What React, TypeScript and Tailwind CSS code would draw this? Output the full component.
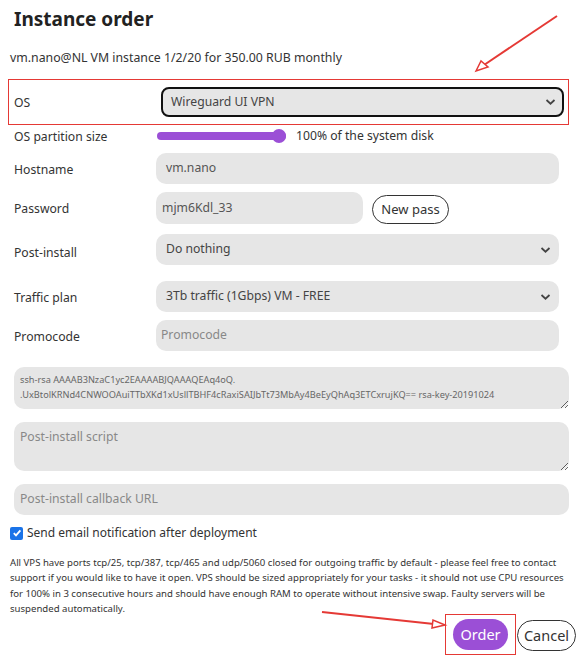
import React from "react";

const font = { fontFamily: '"Noto Sans", "Open Sans", Arial, sans-serif' };

function Chevron() {
  return (
    <svg className="absolute right-[8px] top-1/2 -translate-y-1/2" width="11" height="7" viewBox="0 0 11 7">
      <path d="M1.5 1.5 L5.5 5.2 L9.5 1.5" fill="none" stroke="#444" strokeWidth="1.8" />
    </svg>
  );
}

function Label({ children }: { children: React.ReactNode }) {
  return <div className="w-[142px] shrink-0 text-[12.2px] leading-[20px] pt-[2px] text-[#333]">{children}</div>;
}

export default function App() {
  return (
    <div className="relative w-[585px] h-[663px] bg-white overflow-hidden text-[#333]" style={font}>
      <div className="pl-[14px] pt-[6px] text-[19px] leading-[26px] font-bold text-[#222]">Instance order</div>
      <div className="mt-[16px] pl-[10px] text-[12.3px] leading-[20px] text-[#333]">
        vm.nano@NL VM instance 1/2/20 for 350.00 RUB monthly
      </div>

      <div className="mt-[11px] ml-[8px] w-[561px] h-[46px] border border-[#e53935] flex items-center pl-[5px]">
        <div className="w-[147px] shrink-0 text-[12.2px] pt-[2px] text-[#333]">OS</div>
        <div className="relative w-[403px] h-[30px]">
          <div className="w-full h-full rounded-[8px] border-2 border-[#111] bg-[#e6e6e6] flex items-center pl-[8px] text-[12.2px] text-[#444]">
            Wireguard UI VPN
          </div>
          <Chevron />
        </div>
      </div>

      <div className="flex items-center h-[22px] pl-[14px]">
        <Label>OS partition size</Label>
        <div className="relative w-[129px] h-[14px] ml-[1px] flex items-center">
          <div className="w-full h-[8px] rounded-full bg-[#9b4fd6]" />
          <div className="absolute right-[0px] top-0 w-[14px] h-[14px] rounded-full bg-[#9b4fd6]" />
        </div>
        <div className="ml-[10px] text-[12.2px] text-[#333]">100% of the system disk</div>
      </div>

      <div className="flex items-center mt-[6px] pl-[14px]">
        <Label>Hostname</Label>
        <div className="w-[403px] h-[31px] rounded-[10px] bg-[#e6e6e6] flex items-center pl-[10px] text-[12.2px] text-[#555]">
          vm.nano
        </div>
      </div>

      <div className="flex items-center mt-[8px] pl-[14px]">
        <Label>Password</Label>
        <div className="w-[207px] h-[32px] rounded-[10px] bg-[#e6e6e6] flex items-center pl-[6px] text-[12.2px] text-[#555]">
          mjm6Kdl_33
        </div>
        <div className="ml-[9px] mt-[3px] w-[77px] h-[29px] rounded-full border border-[#333] flex items-center justify-center text-[13px] text-[#333]">
          New pass
        </div>
      </div>

      <div className="flex items-center mt-[10px] pl-[14px]">
        <div className="w-[142px] shrink-0 text-[12.2px] text-[#333] pt-[8px]">Post-install</div>
        <div className="relative w-[403px] h-[31px] rounded-[10px] bg-[#e6e6e6] flex items-center pl-[10px] text-[12.2px] text-[#444]">
          Do nothing
          <Chevron />
        </div>
      </div>

      <div className="flex items-center mt-[16px] pl-[14px]">
        <Label>Traffic plan</Label>
        <div className="relative w-[403px] h-[31px] rounded-[10px] bg-[#e6e6e6] flex items-center pl-[10px] text-[12.2px] text-[#444]">
          3Tb traffic (1Gbps) VM - FREE
          <Chevron />
        </div>
      </div>

      <div className="flex items-center mt-[8px] pl-[14px]">
        <Label>Promocode</Label>
        <div className="w-[403px] h-[31px] rounded-[10px] bg-[#e6e6e6] flex items-center pl-[5px] text-[12.2px] text-[#888]">
          Promocode
        </div>
      </div>

      <div className="mt-[16px] ml-[14px] w-[555px]">
        <textarea
          readOnly
          className="block w-full h-[42px] rounded-[10px] bg-[#e6e6e6] px-[6px] pt-[5px] text-[9.2px] leading-[15px] text-[#666] resize-y outline-none overflow-hidden"
          style={font}
          value={"ssh-rsa AAAAB3NzaC1yc2EAAAABJQAAAQEAq4oQ.\n.UxBtolKRNd4CNWOOAuiTTbXKd1xUsllTBHF4cRaxiSAIJbTt73MbAy4BeEyQhAq3ETCxrujKQ== rsa-key-20191024"}
        />
      </div>

      <div className="mt-[13px] ml-[14px] w-[555px]">
        <textarea
          readOnly
          placeholder="Post-install script"
          className="block w-full h-[49px] rounded-[10px] bg-[#e6e6e6] px-[6px] pt-[6px] text-[12.2px] leading-[18px] placeholder:text-[#888] resize-y outline-none"
          style={font}
        />
      </div>

      <div className="mt-[13px] ml-[14px] w-[555px] h-[31px] rounded-[10px] bg-[#e6e6e6] flex items-center pl-[6px] text-[12.2px] text-[#888]">
        Post-install callback URL
      </div>

      <div className="flex items-center mt-[8px] pl-[10px] h-[20px]">
        <div className="w-[13px] h-[13px] rounded-[2px] bg-[#1a73e8] flex items-center justify-center">
          <svg width="10" height="10" viewBox="0 0 10 10">
            <path d="M1.8 5.2 L4 7.4 L8.4 2.4" fill="none" stroke="white" strokeWidth="1.8" />
          </svg>
        </div>
        <div className="ml-[4px] text-[12px] text-[#333]">Send email notification after deployment</div>
      </div>

      <div className="mt-[12px] pl-[10px] pr-[12px] text-[9.6px] leading-[15.4px] text-[#333]">
        All VPS have ports tcp/25, tcp/387, tcp/465 and udp/5060 closed for outgoing traffic by default - please feel free to contact support if you would like to have it open. VPS should be sized appropriately for your tasks - it should not use CPU resources for 100% in 3 consecutive hours and should have enough RAM to operate without intensive swap. Faulty servers will be suspended automatically.
      </div>

      <div className="absolute left-[445px] top-[614px] flex items-start">
        <div className="w-[71px] h-[41px] border border-[#e53935] flex items-center justify-center">
          <div className="w-[55px] h-[31px] rounded-full bg-[#9b4fd6] text-white text-[14.5px] flex items-center justify-center">Order</div>
        </div>
        <div className="ml-[1px] mt-[6px] w-[59px] h-[31px] rounded-full border border-[#333] text-[14.5px] text-[#333] flex items-center justify-center">
          Cancel
        </div>
      </div>

      <svg className="absolute left-0 top-0 pointer-events-none" width="585" height="663">
        <line x1="557" y1="16" x2="484" y2="65" stroke="#e53935" strokeWidth="2" />
        <path d="M476 71 L481 61 L488 67 Z" fill="white" stroke="#e53935" strokeWidth="1.5" />
        <line x1="322" y1="612" x2="434" y2="624" stroke="#e53935" strokeWidth="2" />
        <path d="M445 625 L433 620 L432 628 Z" fill="white" stroke="#e53935" strokeWidth="1.5" />
      </svg>
    </div>
  );
}
